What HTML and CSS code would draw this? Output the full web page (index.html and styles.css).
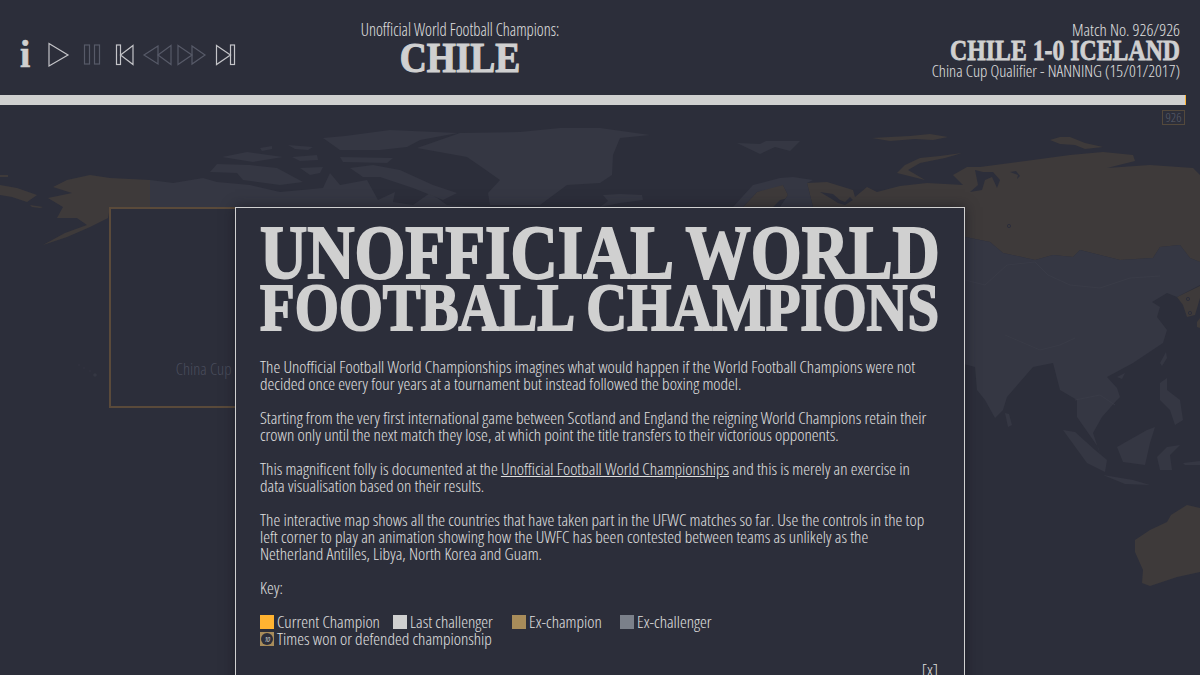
FILE: index.html
```html
<!DOCTYPE html>
<html lang="en">
<head>
<meta charset="utf-8">
<title>Unofficial World Football Champions</title>
<link rel="stylesheet" href="styles.css">
</head>
<body>
<div class="page">
  <svg class="map" viewBox="0 0 1200 675" width="1200" height="675" aria-hidden="true">
    <g class="land-ex">
      <path d="M0 175L8 175L8 177L0 177Z"/>
      <path d="M0 185L17 188L37 195L27 202L12 197L0 195Z"/>
      <path d="M53 187L67 180L90 175L110 178L150 180L150 207L110 207L108 218L90 227L67 237L43 245L65 233L87 225L77 218L57 218L63 207L48 198L72 193Z"/>
      <path d="M30 205L43 207L40 208L32 207Z"/>
      <path d="M872 138L890 137L910 136L930 134L948 137L933 140L915 139L890 141Z"/>
      <path d="M962 153L940 156L920 158L905 165L897 173L917 178L925 180L908 170L920 163L945 158Z"/>
      <path d="M1050 140L1060 137L1070 137L1085 143L1103 147L1085 149L1075 145L1060 144Z"/>
      <path d="M743 207L757 192L772 186L783 185L788 195L780 207Z"/>
      <path d="M807 183L827 182L853 190L855 197L867 187L877 192L900 186L927 183L963 185L953 175L967 167L980 167L1033 160L1070 155L1103 152L1133 155L1135 161L1107 168L1150 165L1193 168L1200 175L1200 262L1190 258L1180 245L1160 247L1153 258L1120 260L1080 250L1073 257L1053 255L1035 260L1003 253L990 242L965 237L930 230L930 207L813 207Z"/>
      <path d="M1177 297L1200 286L1200 298L1195 315L1187 317L1183 305Z"/>
      <path d="M1197 322L1200 318L1200 328L1197 327Z"/>
      <path d="M1135 540L1150 530L1167 522L1171 515L1187 505L1200 508L1200 572L1177 577L1150 586L1142 583L1143 570L1135 552Z"/>
    </g>
    <g class="land-water">
      <path d="M975 170L978 185L970 192L982 190L985 180L992 177L997 188L1000 180L993 172L983 172Z"/>
      <path d="M1010 172L1018 175L1017 179L1020 176L1016 171Z"/>
      <path d="M820 192L833 194L840 200L845 202L850 197L853 200L845 205L838 203L830 198Z"/>
      <path d="M773 207L780 200L793 197L785 204L780 207Z"/>
    </g>
    <g class="land">
      <path d="M150 180L173 183L203 178L217 182L250 185L280 192L323 188L330 173L340 185L367 180L378 200L395 192L393 202L413 205L430 193L447 205L490 207L150 207Z"/>
      <path d="M210 172L217 164L250 165L277 168L303 182L280 185L243 180L237 173Z"/>
      <path d="M222 157L247 152L283 157L253 162Z"/>
      <path d="M260 148L272 146L272 149L262 151Z"/>
      <path d="M300 168L323 167L320 173L310 175Z"/>
      <path d="M288 145L313 147L308 150L295 149Z"/>
      <path d="M292 157L317 155L318 160L300 161Z"/>
      <path d="M323 138L345 136L390 130L458 133L420 140L407 147L380 150L340 150Z"/>
      <path d="M340 157L393 158L387 163L343 162Z"/>
      <path d="M350 168L373 165L400 170L433 185L457 193L443 200L413 188L380 177L363 177Z"/>
      <path d="M460 133L520 132L560 128L600 128L650 135L620 138L613 155L612 175L600 183L567 185L540 205L490 205L488 193L500 180L483 168L467 157L417 148Z"/>
      <path d="M603 195L620 194L642 195L643 200L620 203L600 207L608 201Z"/>
      <path d="M737 143L760 144L766 141L800 141L790 151L775 147L760 154Z"/>
      <path d="M733 207L753 185L780 178L793 177L813 180L807 183L813 207L780 207L788 195L783 185L757 192L743 207Z"/>
      <path d="M965 237L990 242L1003 253L1035 260L1053 255L1073 257L1080 250L1120 260L1153 258L1160 247L1180 245L1190 258L1200 262L1200 285L1177 297L1167 293L1152 302L1160 307L1157 317L1167 330L1163 343L1133 363L1107 377L1117 388L1120 397L1117 400L1102 417L1093 433L1103 463L1098 447L1077 417L1077 400L1060 390L1053 363L1033 367L1007 397L1003 410L995 418L985 400L977 390L975 367L960 363L940 300Z"/>
      <path d="M1005 413L1009 414L1012 425L1008 427Z"/>
      <path d="M1160 363L1166 352L1167 358L1162 366Z"/>
      <path d="M1117 377L1125 373L1122 379Z"/>
      <path d="M1160 383L1167 378L1167 390L1180 400L1183 420L1175 425L1170 410L1160 400Z"/>
      <path d="M1063 430L1075 432L1095 450L1107 460L1105 472L1087 463Z"/>
      <path d="M1103 475L1133 480L1150 485L1125 484Z"/>
      <path d="M1117 447L1147 430L1155 427L1150 443L1145 465L1123 462Z"/>
      <path d="M1157 457L1167 447L1180 445L1170 455L1172 470L1160 470Z"/>
      <path d="M1183 463L1200 461L1200 465L1185 465Z"/>
      <circle cx="79" cy="365" r="0.7"/>
      <circle cx="84" cy="368" r="0.7"/>
      <circle cx="90" cy="371" r="0.7"/>
      <circle cx="95" cy="375" r="1.8"/>
    </g>
    <g class="borders">
      <path d="M965 280L985 285L1007 265L1035 262L1048 275L1070 285L1100 288L1130 278L1160 276"/>
      <path d="M1005 335L1040 350L1060 345L1075 338"/>
      <path d="M1075 400L1100 395L1115 405"/>
    </g>
    <g class="capitals">
      <circle cx="1009" cy="226" r="1.6"/>
      <circle cx="1188" cy="299" r="1.6"/>
      <circle cx="1190" cy="313" r="1.6"/>
    </g>
  </svg>

  <header class="topbar">
    <div class="controls">
      <span class="info">i</span>
      <svg class="icon" viewBox="0 0 190 30" width="190" height="30" aria-hidden="true">
        <path class="on" d="M1 1.5L20 13L1 24Z"/>
        <g class="off">
          <rect x="36.5" y="3" width="5" height="19"/>
          <rect x="46.5" y="3" width="5" height="19"/>
          <path d="M123 3.5L110 13L123 22.5Z"/>
          <path d="M110 4L96 13L110 22Z"/>
          <path d="M130 3.5L144 13L130 22.5Z"/>
          <path d="M144 4L157 13L144 22Z"/>
        </g>
        <g class="on">
          <rect x="68.5" y="3" width="4" height="19.5"/>
          <path d="M85 3.5L72.5 13L85 22.5Z"/>
          <rect x="182.5" y="3" width="4" height="19.5"/>
          <path d="M168.5 3.5L182.5 13L168.5 22.5Z"/>
        </g>
      </svg>
    </div>
    <div class="champion">
      <div class="champion-label">Unofficial World Football Champions:</div>
      <div class="champion-name">CHILE</div>
    </div>
    <div class="match">
      <div class="match-no">Match No. 926/926</div>
      <div class="match-score">CHILE 1-0 ICELAND</div>
      <div class="match-info">China Cup Qualifier - NANNING (15/01/2017)</div>
    </div>
  </header>
  <div class="progress"><div class="progress-fill"></div></div>
  <div class="tag">926</div>

  <div class="tooltip">
    <div class="tooltip-text">China Cup Qualifier - NANNING (15/01/2017)</div>
  </div>

  <main class="panel">
    <h1 class="title">
      <span class="title-one">UNOFFICIAL WORLD</span>
      <span class="title-two">FOOTBALL CHAMPIONS</span>
    </h1>
    <p>The Unofficial Football World Championships imagines what would happen if the World Football Champions were not<br>decided once every four years at a tournament but instead followed the boxing model.</p>
    <p>Starting from the very first international game between Scotland and England the reigning World Champions retain their<br>crown only until the next match they lose, at which point the title transfers to their victorious opponents.</p>
    <p>This magnificent folly is documented at the <a href="#">Unofficial Football World Championships</a> and this is merely an exercise in<br>data visualisation based on their results.</p>
    <p>The interactive map shows all the countries that have taken part in the UFWC matches so far. Use the controls in the top<br>left corner to play an animation showing how the UWFC has been contested between teams as unlikely as the<br>Netherland Antilles, Libya, North Korea and Guam.</p>
    <p>Key:</p>
    <div class="legend">
      <span class="key key-a"><i class="swatch current"></i>Current Champion</span>
      <span class="key key-b"><i class="swatch last"></i>Last challenger</span>
      <span class="key key-c"><i class="swatch ex"></i>Ex-champion</span>
      <span class="key"><i class="swatch exch"></i>Ex-challenger</span>
    </div>
    <div class="legend">
      <span class="key"><i class="swatch ex badge"><b>10</b></i>Times won or defended championship</span>
    </div>
    <div class="close">[x]</div>
  </main>
</div>
</body>
</html>
```
FILE: styles.css
```css
* { box-sizing: border-box; }
html, body { margin: 0; height: 100%; }
body {
  background: #2c2e3a;
  color: #e0e0e0;
  font-family: "Open Sans", "Noto Sans", sans-serif;
  font-stretch: 75%;
  font-weight: 300;
  font-size: 17.2px;
  line-height: 17px;
  overflow: hidden;
}
.page { position: relative; width: 1200px; height: 675px; overflow: hidden; }
.map { position: absolute; left: 0; top: 0; }
.land path, .land circle { fill: #353743; }
.land-ex path { fill: #3e3a3a; }
.land-water path { fill: #2c2e3a; }
.borders path { fill: none; stroke: #3c3e4a; stroke-width: 0.6; }
.capitals circle { fill: none; stroke: #2c2e3a; stroke-width: 1; }

.topbar {
  position: relative;
  height: 95px;
  display: grid;
  grid-template-columns: 240px 400px 1fr;
  padding: 0 20px 0 20px;
  background: #2c2e3a;
}
.controls { display: flex; align-items: flex-start; gap: 18px; padding-top: 42px; }
.info {
  font-family: "Liberation Serif", serif;
  font-stretch: normal;
  font-weight: 700;
  font-size: 37px;
  line-height: 26px;
  width: 10px;
  text-align: center;
  color: #d0d0d0;
  -webkit-text-stroke: 0.6px #d0d0d0;
}
.icon { fill: none; flex: none; }
.icon .on, .icon .on * { stroke: #c4c4c8; stroke-width: 1.2; }
.icon .off * { stroke: #575a68; stroke-width: 1.2; }

.champion { text-align: center; padding-top: 20px; }
.champion-label { font-size: 18px; line-height: 18px; white-space: nowrap; transform: scaleX(0.912); }
.champion-name, .match-score, .title span {
  font-family: "Liberation Serif", serif;
  font-stretch: normal;
  font-weight: 700;
  white-space: nowrap;
  color: #d0d0d0;
}
.champion-name {
  font-size: 43px;
  line-height: 39px;
  -webkit-text-stroke: 1.2px #d0d0d0;
  transform: scaleX(0.87);
}
.match { text-align: right; padding-top: 20px; }
.match-no { font-size: 17px; line-height: 19px; }
.match-score {
  font-size: 29px;
  line-height: 22px;
  -webkit-text-stroke: 0.8px #d0d0d0;
  transform: scaleX(0.82);
  transform-origin: right center;
}
.match-info { font-size: 16.7px; line-height: 20px; }

.progress { position: relative; height: 10px; }
.progress-fill { width: 1186px; height: 10px; background: #d0d0d0; border-right: 1px solid #ffb331; }
.tag {
  position: absolute;
  left: 1162px;
  top: 110px;
  width: 23px;
  height: 15px;
  border: 1px solid #54493c;
  color: #5a5d6b;
  font-size: 13px;
  line-height: 13px;
  text-align: center;
}

.tooltip {
  position: absolute;
  left: 109px;
  top: 207px;
  width: 382px;
  height: 201px;
  border: 2px solid #5a4a3a;
  background: #2c2e3a;
  text-align: center;
  padding-top: 151px;
}
.tooltip-text { color: #4a4d5c; font-size: 16.7px; line-height: 17px; white-space: nowrap; }

.panel {
  position: absolute;
  left: 235px;
  top: 207px;
  width: 730px;
  height: 560px;
  padding: 14px 24px;
  background: #2c2e3a;
  border: 1px solid #d0d0d0;
  box-shadow: 0 0 12px rgba(20, 20, 28, 0.6);
}
.title { margin: 0 0 26px; }
.title span { display: block; transform-origin: left center; -webkit-text-stroke: 2px #d0d0d0; }
.title-one { font-size: 76px; line-height: 60px; transform: scaleX(0.86); }
.title-two { font-size: 68px; line-height: 50px; transform: scaleX(0.834); }
p { margin: 0 0 17px; white-space: nowrap; }
a { color: inherit; text-decoration: underline; }
.legend { display: flex; height: 17px; align-items: center; }
.key { display: inline-flex; align-items: center; white-space: nowrap; }
.key-a { width: 133px; }
.key-b { width: 119px; }
.key-c { width: 108px; }
.swatch { display: block; width: 14px; height: 14px; margin-right: 3px; flex: none; }
.current { background: #ffb331; }
.last { background: #d0d0d0; }
.ex { background: #a88c5a; }
.exch { background: #7b808a; }
.badge { position: relative; }
.badge b {
  position: absolute;
  left: 1px;
  top: 1px;
  width: 12px;
  height: 12px;
  border-radius: 50%;
  background: #2c2e3a;
  color: #c8c8c8;
  font-size: 8px;
  letter-spacing: -0.5px;
  font-weight: 400;
  line-height: 12px;
  text-align: center;
}
.close { text-align: right; margin-top: 14px; padding-right: 2px; }
```
